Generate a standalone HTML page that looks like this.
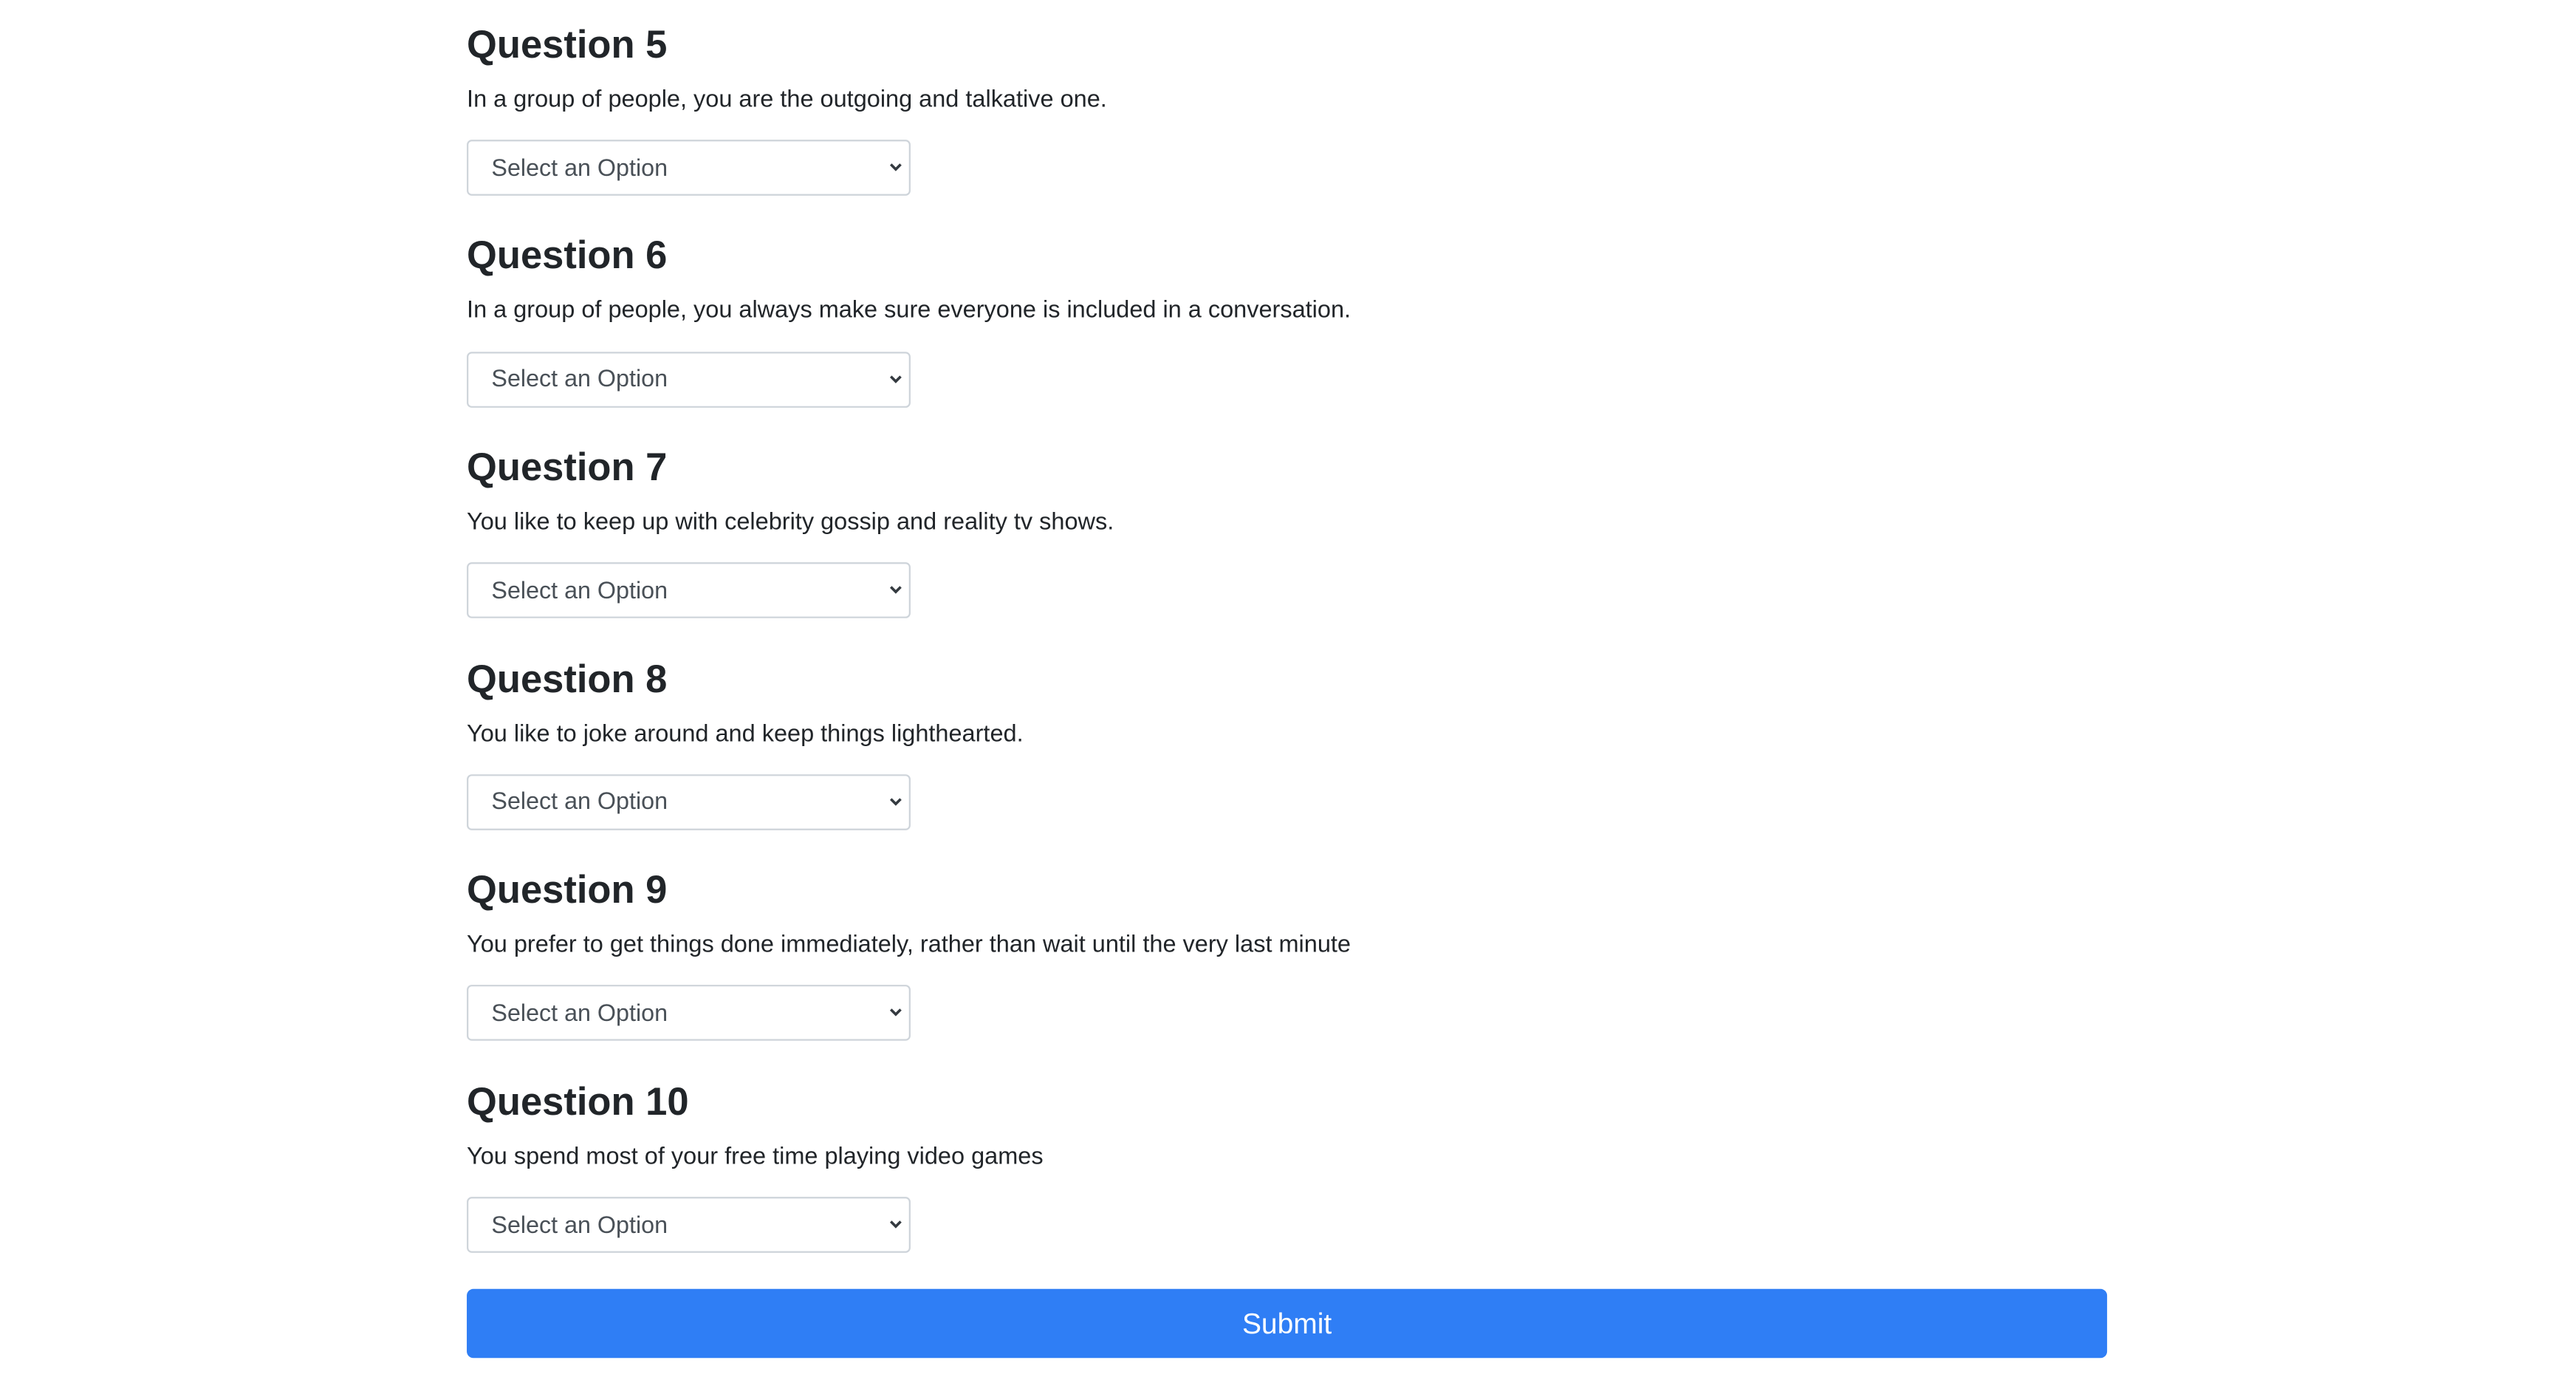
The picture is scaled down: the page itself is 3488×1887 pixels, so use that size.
<!DOCTYPE html>
<html><head><meta charset="utf-8"><style>
html,body{margin:0;padding:0;background:#fff;}
body{width:3488px;height:1886px;overflow:hidden;position:relative;font-family:"Liberation Sans",sans-serif;color:#212529;}
#w{position:absolute;left:0;top:0;width:1566px;height:848px;transform:scale(2.2255);transform-origin:0 0;}
.b{position:absolute;left:284px;width:1000px;}
.h{position:absolute;left:0;top:12.8px;font-size:23.6px;line-height:30px;font-weight:bold;margin:0;}
.d{position:absolute;left:0;top:50.8px;font-size:14.6px;line-height:20px;}
.s{position:absolute;left:0;top:85px;width:268px;height:32px;border:1px solid #ced4da;border-radius:3px;background:#fff;}
.s span{position:absolute;left:14px;top:7.6px;font-size:14.5px;line-height:18px;color:#495057;}
.s svg{position:absolute;right:3px;top:12px;}
.btn{position:absolute;left:284px;top:784px;width:998px;height:42px;background:#2f7ef5;border-radius:4px;color:#fff;font-size:17.5px;line-height:42px;text-align:center;}
</style></head><body><div id="w">
<div class="b" style="top:0px"><div class="h">Question 5</div><div class="d">In a group of people, you are the outgoing and talkative one.</div><div class="s"><span>Select an Option</span><svg width="10" height="8" viewBox="0 0 10 8"><path d="M2 2l3 3 3-3" fill="none" stroke="#343a40" stroke-width="1.6"/></svg></div></div>
<div class="b" style="top:128.6px"><div class="h">Question 6</div><div class="d">In a group of people, you always make sure everyone is included in a conversation.</div><div class="s"><span>Select an Option</span><svg width="10" height="8" viewBox="0 0 10 8"><path d="M2 2l3 3 3-3" fill="none" stroke="#343a40" stroke-width="1.6"/></svg></div></div>
<div class="b" style="top:257.2px"><div class="h">Question 7</div><div class="d">You like to keep up with celebrity gossip and reality tv shows.</div><div class="s"><span>Select an Option</span><svg width="10" height="8" viewBox="0 0 10 8"><path d="M2 2l3 3 3-3" fill="none" stroke="#343a40" stroke-width="1.6"/></svg></div></div>
<div class="b" style="top:385.8px"><div class="h">Question 8</div><div class="d">You like to joke around and keep things lighthearted.</div><div class="s"><span>Select an Option</span><svg width="10" height="8" viewBox="0 0 10 8"><path d="M2 2l3 3 3-3" fill="none" stroke="#343a40" stroke-width="1.6"/></svg></div></div>
<div class="b" style="top:514.4px"><div class="h">Question 9</div><div class="d">You prefer to get things done immediately, rather than wait until the very last minute</div><div class="s"><span>Select an Option</span><svg width="10" height="8" viewBox="0 0 10 8"><path d="M2 2l3 3 3-3" fill="none" stroke="#343a40" stroke-width="1.6"/></svg></div></div>
<div class="b" style="top:643px"><div class="h">Question 10</div><div class="d">You spend most of your free time playing video games</div><div class="s"><span>Select an Option</span><svg width="10" height="8" viewBox="0 0 10 8"><path d="M2 2l3 3 3-3" fill="none" stroke="#343a40" stroke-width="1.6"/></svg></div></div>
<div class="btn">Submit</div>
</div></body></html>
